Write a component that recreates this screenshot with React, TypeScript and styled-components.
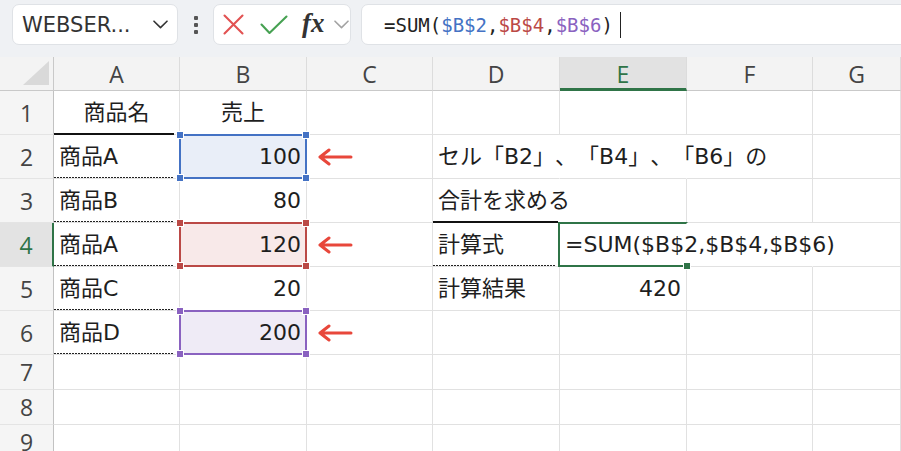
import React from "react";
import styled, { createGlobalStyle, css } from "styled-components";

const GlobalStyle = createGlobalStyle`
  html, body {
    margin: 0;
    padding: 0;
    background: #fff;
  }
  body {
    overflow: hidden;
  }
`;

const GREEN = "#2f7447";

const FRAME = {
  blue: { line: "#4472c4", fill: "#e9eef8" },
  red: { line: "#bb4946", fill: "#f8e9e9" },
  purple: { line: "#8a62c0", fill: "#efebf6" },
};

type FrameColor = keyof typeof FRAME;

const Page = styled.div`
  width: 901px;
  height: 451px;
  overflow: hidden;
  display: flex;
  flex-direction: column;
  background: #fff;
  font-family: "Open Sans", sans-serif;
`;

/* ---------- formula bar ---------- */

const Toolbar = styled.div`
  flex: none;
  height: 57px;
  box-sizing: border-box;
  padding: 4px 0 0 12px;
  display: flex;
  align-items: flex-start;
  background: #eff1f4;
`;

const Box = styled.div`
  height: 41px;
  box-sizing: border-box;
  background: #fff;
  border: 1px solid #dfe2e6;
  border-radius: 7px;
  display: flex;
  align-items: center;
`;

const NameBox = styled(Box)`
  width: 166px;
  padding: 0 9px 0 9px;
  justify-content: space-between;
  font-family: "DejaVu Sans", sans-serif;
  font-size: 21px;
  color: #333;
`;

const Kebab = styled.div`
  width: 35px;
  height: 41px;
  display: flex;
  align-items: center;
  justify-content: center;
`;

const ActionBox = styled(Box)`
  width: 138px;
  padding-left: 9px;
`;

const IconSlot = styled.span<{ $ml?: number }>`
  display: flex;
  align-items: center;
  margin-left: ${(p) => p.$ml ?? 0}px;
`;

const Fx = styled.span`
  font-family: "Liberation Serif", serif;
  font-style: italic;
  font-weight: 700;
  font-size: 27px;
  color: #333;
  line-height: 1;
  margin-left: 14px;
  margin-top: -2px;
`;

const FormulaBox = styled(Box)`
  flex: 1;
  margin: 0 -20px 0 10px;
  padding-left: 22px;
  font-family: "DejaVu Sans Mono", monospace;
  font-size: 19px;
  color: #222;
  white-space: pre;
`;

const Ref = styled.span<{ $c: FrameColor }>`
  color: ${(p) => FRAME[p.$c].line};
`;

const Caret = styled.span`
  display: inline-block;
  width: 1.5px;
  height: 26px;
  margin-left: 7px;
  background: #222;
`;

/* ---------- sheet ---------- */

const Sheet = styled.div`
  flex: 1;
  display: grid;
  grid-template-columns: 54px 126px 127px 126px 127px 127px 126px 1fr;
  grid-template-rows: 34px repeat(6, 44px) repeat(3, 35px);
  background: #fff;
`;

const Corner = styled.div`
  background: #f3f3f3;
  border-right: 1px solid #c9c9c9;
  border-bottom: 1px solid #c9c9c9;
  box-sizing: border-box;
  display: flex;
  align-items: flex-end;
  justify-content: flex-end;
  padding: 0 4px 5px 0;
`;

const ColHeader = styled.div<{ $active?: boolean }>`
  box-sizing: border-box;
  display: flex;
  align-items: center;
  justify-content: center;
  font-size: 23px;
  color: #444;
  background: #f3f3f3;
  border-right: 1px solid #dcdcdc;
  border-bottom: 1px solid #c9c9c9;
  ${(p) =>
    p.$active &&
    css`
      background: #e2e2e2;
      color: ${GREEN};
      border-bottom: 3px solid ${GREEN};
      padding-top: 2px;
    `}
`;

const RowHeader = styled.div<{ $active?: boolean }>`
  box-sizing: border-box;
  display: flex;
  align-items: center;
  justify-content: center;
  font-size: 23px;
  color: #444;
  background: #f5f5f5;
  border-right: 1px solid #c2c2c2;
  border-bottom: 1px solid #e4e4e4;
  ${(p) =>
    p.$active &&
    css`
      background: #e3e3e3;
      color: ${GREEN};
      border-right: 2px solid ${GREEN};
    `}
`;

type Line = "thick" | "dotted";

const Cell = styled.div<{
  $align?: "left" | "right" | "center";
  $line?: Line;
  $inset?: number;
  $fill?: string;
  $open?: boolean;
}>`
  position: relative;
  box-sizing: border-box;
  display: flex;
  align-items: center;
  justify-content: ${(p) =>
    p.$align === "right" ? "flex-end" : p.$align === "center" ? "center" : "flex-start"};
  padding: 0 5px;
  white-space: nowrap;
  font-family: "DejaVu Sans", "Noto Sans CJK JP", sans-serif;
  font-size: 22px;
  line-height: 1;
  text-spacing-trim: space-all;
  color: #1e1e1e;
  background: ${(p) => p.$fill ?? "transparent"};
  border-right: 1px solid ${(p) => (p.$open ? "transparent" : "#e1e1e1")};
  border-bottom: 1px solid #e1e1e1;
  &::after {
    content: "";
    position: absolute;
    left: 0;
    right: ${(p) => p.$inset ?? 5}px;
    display: ${(p) => (p.$line ? "block" : "none")};
  }
  ${(p) =>
    p.$line === "thick" &&
    css`
      &::after {
        bottom: -1px;
        height: 2px;
        background: #111;
      }
    `}
  ${(p) =>
    p.$line === "dotted" &&
    css`
      &::after {
        bottom: 0;
        height: 1px;
        background: repeating-linear-gradient(to right, #222 0 2px, transparent 2px 3px);
      }
    `}
`;

const Frame = styled.div<{ $color: string; $side?: number; $openRight?: boolean }>`
  position: absolute;
  top: -1px;
  bottom: -1px;
  left: ${(p) => -(p.$side ?? 1)}px;
  right: ${(p) => -(p.$side ?? 1)}px;
  border: 2px solid ${(p) => p.$color};
  ${(p) => p.$openRight && "border-right-color: transparent;"}
  pointer-events: none;
  z-index: 2;
`;

const Handle = styled.span<{ $color: string; $pos: string }>`
  position: absolute;
  width: 6px;
  height: 6px;
  background: ${(p) => p.$color};
  box-shadow: 0 0 0 1px #fff;
  ${(p) => (p.$pos.includes("t") ? "top: -4px;" : "bottom: -4px;")}
  ${(p) => (p.$pos.includes("l") ? "left: -4px;" : "right: -4px;")}
`;

const ArrowSvg = styled.svg`
  margin-left: 5px;
`;

/* ---------- icons ---------- */

const Chevron = ({ color = "#333", w = 15 }: { color?: string; w?: number }) => (
  <svg width={w} height={w * 0.6} viewBox="0 0 15 9" fill="none">
    <polyline points="1,1.2 7.5,7.6 14,1.2" stroke={color} strokeWidth={1.6} strokeLinecap="round" strokeLinejoin="round" />
  </svg>
);

const Dots = () => (
  <svg width="6" height="20" viewBox="0 0 6 20">
    <rect x="1" y="1" width="4" height="4" rx="1" fill="#555" />
    <rect x="1" y="8" width="4" height="4" rx="1" fill="#555" />
    <rect x="1" y="15" width="4" height="4" rx="1" fill="#555" />
  </svg>
);

const Cross = () => (
  <svg width="21" height="21" viewBox="0 0 21 21">
    <path d="M1.5 1.5 L19.5 19.5 M19.5 1.5 L1.5 19.5" stroke="#e25252" strokeWidth={2.1} strokeLinecap="round" />
  </svg>
);

const Check = () => (
  <svg width="28" height="20" viewBox="0 0 28 20">
    <polyline points="1.5,9.5 9.5,18 26.5,1.5" fill="none" stroke="#46a152" strokeWidth={2.1} strokeLinecap="round" strokeLinejoin="round" />
  </svg>
);

const Arrow = () => (
  <ArrowSvg width="36" height="18" viewBox="0 0 36 18">
    <path d="M3 9 H34 M12 2 L3 9 L12 16" fill="none" stroke="#e8473b" strokeWidth={3} strokeLinecap="round" strokeLinejoin="round" />
  </ArrowSvg>
);

const Triangle = () => (
  <svg width="26" height="24" viewBox="0 0 26 24">
    <polygon points="26,0 26,24 0,24" fill="#d9d9d9" />
  </svg>
);

/* ---------- data ---------- */

interface CellSpec {
  text?: string;
  align?: "left" | "right" | "center";
  line?: Line;
  inset?: number;
  frame?: FrameColor;
  selected?: boolean;
  arrow?: boolean;
  open?: boolean;
}

const E: CellSpec = {};

const COLS = ["A", "B", "C", "D", "E", "F", "G"];

const ROWS: CellSpec[][] = [
  [{ text: "商品名", align: "center", line: "thick" }, { text: "売上", align: "center" }, E, E, E, E, E],
  [
    { text: "商品A", line: "dotted" },
    { text: "100", align: "right", frame: "blue" },
    { arrow: true },
    { text: "セル「B2」、「B4」、「B6」の", open: true },
    { open: true },
    E,
    E,
  ],
  [
    { text: "商品B", line: "dotted" },
    { text: "80", align: "right" },
    E,
    { text: "合計を求める", line: "thick", inset: 1, open: true },
    E,
    E,
    E,
  ],
  [
    { text: "商品A", line: "dotted" },
    { text: "120", align: "right", frame: "red" },
    { arrow: true },
    { text: "計算式", line: "dotted", inset: 4 },
    { text: "=SUM($B$2,$B$4,$B$6)", selected: true, open: true },
    { open: true },
    E,
  ],
  [{ text: "商品C", line: "dotted" }, { text: "20", align: "right" }, E, { text: "計算結果" }, { text: "420", align: "right" }, E, E],
  [{ text: "商品D", line: "dotted" }, { text: "200", align: "right", frame: "purple" }, { arrow: true }, E, E, E, E],
  [E, E, E, E, E, E, E],
  [E, E, E, E, E, E, E],
  [E, E, E, E, E, E, E],
];

const ACTIVE_COL = "E";
const ACTIVE_ROW = 4;

function SheetCell({ spec }: { spec: CellSpec }) {
  const frame = spec.frame ? FRAME[spec.frame] : null;
  return (
    <Cell $align={spec.align} $line={spec.line} $inset={spec.inset} $fill={frame?.fill} $open={spec.open}>
      {spec.text}
      {spec.arrow && <Arrow />}
      {frame && (
        <Frame $color={frame.line}>
          {["tl", "tr", "bl", "br"].map((p) => (
            <Handle key={p} $pos={p} $color={frame.line} />
          ))}
        </Frame>
      )}
      {spec.selected && (
        <Frame $color={GREEN} $side={2} $openRight>
          <Handle $pos="br" $color={GREEN} />
        </Frame>
      )}
    </Cell>
  );
}

export default function App() {
  return (
    <>
      <GlobalStyle />
      <Page>
        <Toolbar>
          <NameBox>
            <span>WEBSER...</span>
            <Chevron />
          </NameBox>
          <Kebab>
            <Dots />
          </Kebab>
          <ActionBox>
            <IconSlot>
              <Cross />
            </IconSlot>
            <IconSlot $ml={16}>
              <Check />
            </IconSlot>
            <Fx>fx</Fx>
            <IconSlot $ml={9}>
              <Chevron color="#a3a3a3" w={15} />
            </IconSlot>
          </ActionBox>
          <FormulaBox>
            =SUM(<Ref $c="blue">$B$2</Ref>,<Ref $c="red">$B$4</Ref>,<Ref $c="purple">$B$6</Ref>)
            <Caret />
          </FormulaBox>
        </Toolbar>

        <Sheet>
          <Corner>
            <Triangle />
          </Corner>
          {COLS.map((c) => (
            <ColHeader key={c} $active={c === ACTIVE_COL}>
              {c}
            </ColHeader>
          ))}
          {ROWS.map((row, i) => (
            <React.Fragment key={i}>
              <RowHeader $active={i + 1 === ACTIVE_ROW}>{i + 1}</RowHeader>
              {row.map((spec, j) => (
                <SheetCell key={j} spec={spec} />
              ))}
            </React.Fragment>
          ))}
        </Sheet>
      </Page>
    </>
  );
}
